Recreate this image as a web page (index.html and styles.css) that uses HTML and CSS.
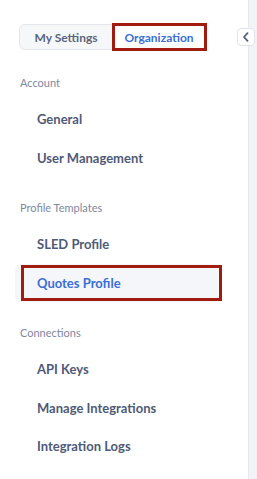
FILE: index.html
```html
<!DOCTYPE html>
<html>
<head>
<meta charset="utf-8">
<link rel="stylesheet" href="styles.css">
</head>
<body>
<div class="page">
  <aside class="sidebar">
    <div class="toggle">
      <span class="seg">My Settings</span>
      <span class="seg seg-active">Organization</span>
    </div>

    <section class="group">
      <div class="group-title">Account</div>
      <a class="item">General</a>
      <a class="item">User Management</a>
    </section>

    <section class="group">
      <div class="group-title">Profile Templates</div>
      <a class="item">SLED Profile</a>
      <a class="item item-active">Quotes Profile</a>
    </section>

    <section class="group">
      <div class="group-title">Connections</div>
      <a class="item">API Keys</a>
      <a class="item">Manage Integrations</a>
      <a class="item">Integration Logs</a>
    </section>

    <button class="collapse" aria-label="Collapse">
      <svg width="8" height="10" viewBox="0 0 8 10"><path d="M5.5 1.2 L2 5 L5.5 8.8" fill="none" stroke="#556080" stroke-width="1.8" stroke-linecap="round" stroke-linejoin="round"/></svg>
    </button>
  </aside>
  <div class="main"></div>
</div>
</body>
</html>
```

FILE: styles.css
```css
* { box-sizing: border-box; }
html, body { margin: 0; padding: 0; height: 100%; }
body {
  font-family: Lato, "Open Sans", "Liberation Sans", sans-serif;
  background: #f2f3f7;
}
.page {
  display: flex;
  min-height: 479px;
}
.sidebar {
  position: relative;
  width: 249px;
  flex: none;
  background: #ffffff;
  border-right: 1px solid #e6e8ee;
  padding: 24px 0 0 0;
}
.main { flex: 1; background: #f2f3f7; }

.toggle {
  display: flex;
  margin-left: 19px;
  width: 187px;
  height: 26px;
  border: 1px solid #e3e6ec;
  border-radius: 6px;
  background: #f6f7f9;
  margin-bottom: 26px;
}
.seg {
  flex: 1;
  display: flex;
  align-items: center;
  justify-content: center;
  font-size: 12px;
  font-weight: 700;
  color: #5a6580;
}
.seg:first-child { padding-right: 1px; }
.seg-active {
  position: relative;
  background: #ffffff;
  color: #3b6fd6;
}
.seg-active::after {
  content: "";
  position: absolute;
  left: -1px; top: -2px; right: -2px; bottom: -2px;
  border: 3px solid #a21b0f;
}

.group { margin-bottom: 24px; }
.group-title {
  height: 14px;
  line-height: 14px;
  padding-left: 20px;
  font-size: 11px;
  color: #7d88a3;
  margin-bottom: 10px;
}
.item {
  display: flex;
  align-items: center;
  height: 38.5px;
  padding-left: 37px;
  font-size: 13px;
  font-weight: 700;
  color: #4f5a78;
  margin-right: 27px;
  margin-left: 15px;
  padding-left: 22px;
  border-radius: 6px;
}
.item-active {
  position: relative;
  background: #f5f6fa;
  color: #3b6fd6;
}
.item-active::after {
  content: "";
  position: absolute;
  left: 6px; top: 1.5px; right: -1px; bottom: 1px;
  border: 3px solid #a21b0f;
}

.collapse {
  position: absolute;
  left: 237px;
  top: 28px;
  width: 18px;
  height: 18px;
  padding: 0;
  border: 1px solid #e1e4ea;
  border-radius: 4px;
  background: #ffffff;
  display: flex;
  align-items: center;
  justify-content: center;
}
```
